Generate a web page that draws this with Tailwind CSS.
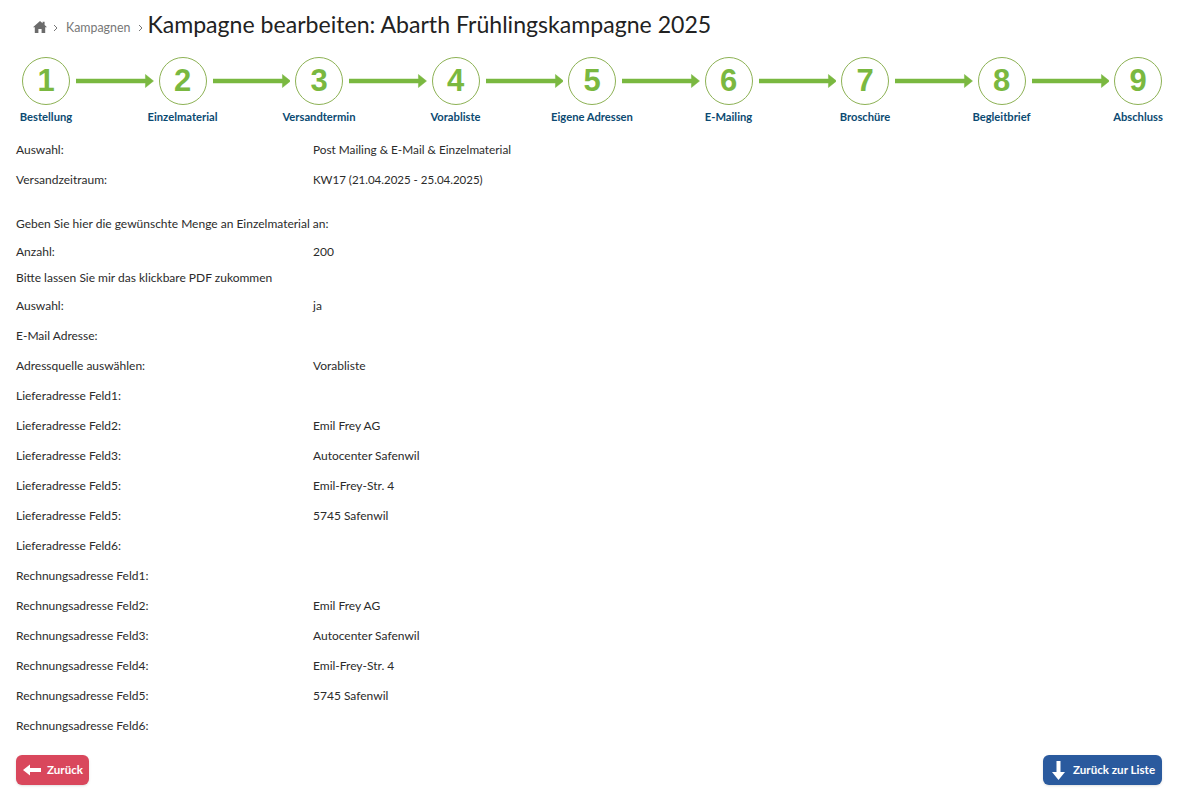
<!DOCTYPE html>
<html lang="de">
<head>
  <meta charset="UTF-8" />
  <title>Kampagne bearbeiten</title>
  <script src="https://cdn.jsdelivr.net/npm/@tailwindcss/browser@4"></script>
</head>
<body class="bg-white text-[#2b2b2b] font-['Lato','Open_Sans',sans-serif] text-[12px] h-[805px] overflow-hidden">

  <!-- breadcrumb + title -->
  <div class="flex items-center h-[50px] pl-[33px]">
    <svg class="w-[14px] h-[12px] mt-[3px]" viewBox="0 0 14 12"><path fill="#6b6b6b" d="M7 0 L9.6 2.3 V0.8 H11.6 V4.1 L14 6.2 L12.2 6.2 L12.2 12 L8.6 12 L8.6 8 L5.4 8 L5.4 12 L1.8 12 L1.8 6.2 L0 6.2 Z"/></svg>
    <svg class="w-[5px] h-[8px] ml-[6px] mt-[5px]" viewBox="0 0 5 8"><path fill="none" stroke="#777" stroke-width="1" d="M1 1 L4 4 L1 7"/></svg>
    <span class="ml-[8px] mt-[6px] text-[12.4px] text-[#777]">Kampagnen</span>
    <svg class="w-[5px] h-[8px] ml-[8px] mt-[5px]" viewBox="0 0 5 8"><path fill="none" stroke="#777" stroke-width="1" d="M1 1 L4 4 L1 7"/></svg>
    <h1 class="ml-[4px] text-[23.1px] text-[#222] leading-none">Kampagne bearbeiten: Abarth Frühlingskampagne 2025</h1>
  </div>

  <!-- steps -->
  <div class="flex items-center px-[22px] mt-[7px]">
    <div class="w-12 h-12 shrink-0 rounded-full border border-[#8db255] flex items-center justify-center text-[#7ab840] text-[31px] font-bold font-['Liberation_Sans',sans-serif]">1</div>
    <svg class="flex-1 h-[14px] ml-[6px] mr-[5px]" viewBox="0 0 77 14" preserveAspectRatio="none"><path fill="#7ab840" stroke="#7ab840" stroke-width="0.5" stroke-linejoin="round" d="M0 5 H69 V0.5 L77 7 L69 13.5 V9 H0 Z"/></svg>
    <div class="w-12 h-12 shrink-0 rounded-full border border-[#8db255] flex items-center justify-center text-[#7ab840] text-[31px] font-bold font-['Liberation_Sans',sans-serif]">2</div>
    <svg class="flex-1 h-[14px] ml-[6px] mr-[5px]" viewBox="0 0 77 14" preserveAspectRatio="none"><path fill="#7ab840" stroke="#7ab840" stroke-width="0.5" stroke-linejoin="round" d="M0 5 H69 V0.5 L77 7 L69 13.5 V9 H0 Z"/></svg>
    <div class="w-12 h-12 shrink-0 rounded-full border border-[#8db255] flex items-center justify-center text-[#7ab840] text-[31px] font-bold font-['Liberation_Sans',sans-serif]">3</div>
    <svg class="flex-1 h-[14px] ml-[6px] mr-[5px]" viewBox="0 0 77 14" preserveAspectRatio="none"><path fill="#7ab840" stroke="#7ab840" stroke-width="0.5" stroke-linejoin="round" d="M0 5 H69 V0.5 L77 7 L69 13.5 V9 H0 Z"/></svg>
    <div class="w-12 h-12 shrink-0 rounded-full border border-[#8db255] flex items-center justify-center text-[#7ab840] text-[31px] font-bold font-['Liberation_Sans',sans-serif]">4</div>
    <svg class="flex-1 h-[14px] ml-[6px] mr-[5px]" viewBox="0 0 77 14" preserveAspectRatio="none"><path fill="#7ab840" stroke="#7ab840" stroke-width="0.5" stroke-linejoin="round" d="M0 5 H69 V0.5 L77 7 L69 13.5 V9 H0 Z"/></svg>
    <div class="w-12 h-12 shrink-0 rounded-full border border-[#8db255] flex items-center justify-center text-[#7ab840] text-[31px] font-bold font-['Liberation_Sans',sans-serif]">5</div>
    <svg class="flex-1 h-[14px] ml-[6px] mr-[5px]" viewBox="0 0 77 14" preserveAspectRatio="none"><path fill="#7ab840" stroke="#7ab840" stroke-width="0.5" stroke-linejoin="round" d="M0 5 H69 V0.5 L77 7 L69 13.5 V9 H0 Z"/></svg>
    <div class="w-12 h-12 shrink-0 rounded-full border border-[#8db255] flex items-center justify-center text-[#7ab840] text-[31px] font-bold font-['Liberation_Sans',sans-serif]">6</div>
    <svg class="flex-1 h-[14px] ml-[6px] mr-[5px]" viewBox="0 0 77 14" preserveAspectRatio="none"><path fill="#7ab840" stroke="#7ab840" stroke-width="0.5" stroke-linejoin="round" d="M0 5 H69 V0.5 L77 7 L69 13.5 V9 H0 Z"/></svg>
    <div class="w-12 h-12 shrink-0 rounded-full border border-[#8db255] flex items-center justify-center text-[#7ab840] text-[31px] font-bold font-['Liberation_Sans',sans-serif]">7</div>
    <svg class="flex-1 h-[14px] ml-[6px] mr-[5px]" viewBox="0 0 77 14" preserveAspectRatio="none"><path fill="#7ab840" stroke="#7ab840" stroke-width="0.5" stroke-linejoin="round" d="M0 5 H69 V0.5 L77 7 L69 13.5 V9 H0 Z"/></svg>
    <div class="w-12 h-12 shrink-0 rounded-full border border-[#8db255] flex items-center justify-center text-[#7ab840] text-[31px] font-bold font-['Liberation_Sans',sans-serif]">8</div>
    <svg class="flex-1 h-[14px] ml-[6px] mr-[5px]" viewBox="0 0 77 14" preserveAspectRatio="none"><path fill="#7ab840" stroke="#7ab840" stroke-width="0.5" stroke-linejoin="round" d="M0 5 H69 V0.5 L77 7 L69 13.5 V9 H0 Z"/></svg>
    <div class="w-12 h-12 shrink-0 rounded-full border border-[#8db255] flex items-center justify-center text-[#7ab840] text-[31px] font-bold font-['Liberation_Sans',sans-serif]">9</div>
  </div>
  <div class="flex justify-between px-px mt-[5px] text-[11.2px] font-bold text-[#0b4a72] leading-[14px] text-center">
    <span class="w-[90px]">Bestellung</span>
    <span class="w-[90px]">Einzelmaterial</span>
    <span class="w-[90px]">Versandtermin</span>
    <span class="w-[90px]">Vorabliste</span>
    <span class="w-[90px]">Eigene Adressen</span>
    <span class="w-[90px]">E-Mailing</span>
    <span class="w-[90px]">Broschüre</span>
    <span class="w-[90px]">Begleitbrief</span>
    <span class="w-[90px]">Abschluss</span>
  </div>

  <!-- summary -->
  <div class="pl-4 mt-[11px] leading-[16px]">
    <div class="flex h-[30px] items-center"><span class="w-[297px]">Auswahl:</span><span class="text-[11.8px]">Post Mailing &amp; E-Mail &amp; Einzelmaterial</span></div>
    <div class="flex h-[30px] items-center"><span class="w-[297px]">Versandzeitraum:</span><span class="text-[11.5px]">KW17 (21.04.2025 - 25.04.2025)</span></div>
    <div class="flex h-[30px] items-center mt-[14px]">Geben Sie hier die gewünschte Menge an Einzelmaterial an:</div>
    <div class="flex h-[26px] items-center"><span class="w-[297px]">Anzahl:</span><span>200</span></div>
    <div class="flex h-[26px] items-center">Bitte lassen Sie mir das klickbare PDF zukommen</div>
    <div class="flex h-[30px] items-center"><span class="w-[297px]">Auswahl:</span><span>ja</span></div>
    <div class="flex h-[30px] items-center"><span class="w-[297px]">E-Mail Adresse:</span></div>
    <div class="flex h-[30px] items-center"><span class="w-[297px]">Adressquelle auswählen:</span><span>Vorabliste</span></div>
    <div class="flex h-[30px] items-center"><span class="w-[297px]">Lieferadresse Feld1:</span></div>
    <div class="flex h-[30px] items-center"><span class="w-[297px]">Lieferadresse Feld2:</span><span>Emil Frey AG</span></div>
    <div class="flex h-[30px] items-center"><span class="w-[297px]">Lieferadresse Feld3:</span><span>Autocenter Safenwil</span></div>
    <div class="flex h-[30px] items-center"><span class="w-[297px]">Lieferadresse Feld5:</span><span>Emil-Frey-Str. 4</span></div>
    <div class="flex h-[30px] items-center"><span class="w-[297px]">Lieferadresse Feld5:</span><span>5745 Safenwil</span></div>
    <div class="flex h-[30px] items-center"><span class="w-[297px]">Lieferadresse Feld6:</span></div>
    <div class="flex h-[30px] items-center"><span class="w-[297px]">Rechnungsadresse Feld1:</span></div>
    <div class="flex h-[30px] items-center"><span class="w-[297px]">Rechnungsadresse Feld2:</span><span>Emil Frey AG</span></div>
    <div class="flex h-[30px] items-center"><span class="w-[297px]">Rechnungsadresse Feld3:</span><span>Autocenter Safenwil</span></div>
    <div class="flex h-[30px] items-center"><span class="w-[297px]">Rechnungsadresse Feld4:</span><span>Emil-Frey-Str. 4</span></div>
    <div class="flex h-[30px] items-center"><span class="w-[297px]">Rechnungsadresse Feld5:</span><span>5745 Safenwil</span></div>
    <div class="flex h-[30px] items-center"><span class="w-[297px]">Rechnungsadresse Feld6:</span></div>
  </div>

  <!-- buttons -->
  <div class="flex justify-between px-4 pr-[22px] mt-[14px]">
    <button class="flex items-center h-[30px] w-[73px] pl-[7px] rounded-[6px] bg-[#d9475c] text-white text-[11.6px] font-bold shadow-sm">
      <svg class="w-[18px] h-[12px]" viewBox="0 0 18 12"><path fill="#fff" d="M0 6 L7 0.5 V4 H18 V8 H7 V11.5 Z"/></svg>
      <span class="ml-[6px]">Zurück</span>
    </button>
    <button class="flex items-center h-[30px] w-[119px] pl-[9px] rounded-[6px] bg-[#2a5a9e] text-white text-[11.6px] font-bold shadow-sm">
      <svg class="w-[13px] h-[19px]" viewBox="0 0 13 19"><path fill="#fff" d="M4.5 0 H8.5 V11 H13 L6.5 19 L0 11 H4.5 Z"/></svg>
      <span class="ml-[8px]">Zurück zur Liste</span>
    </button>
  </div>
</body>
</html>
